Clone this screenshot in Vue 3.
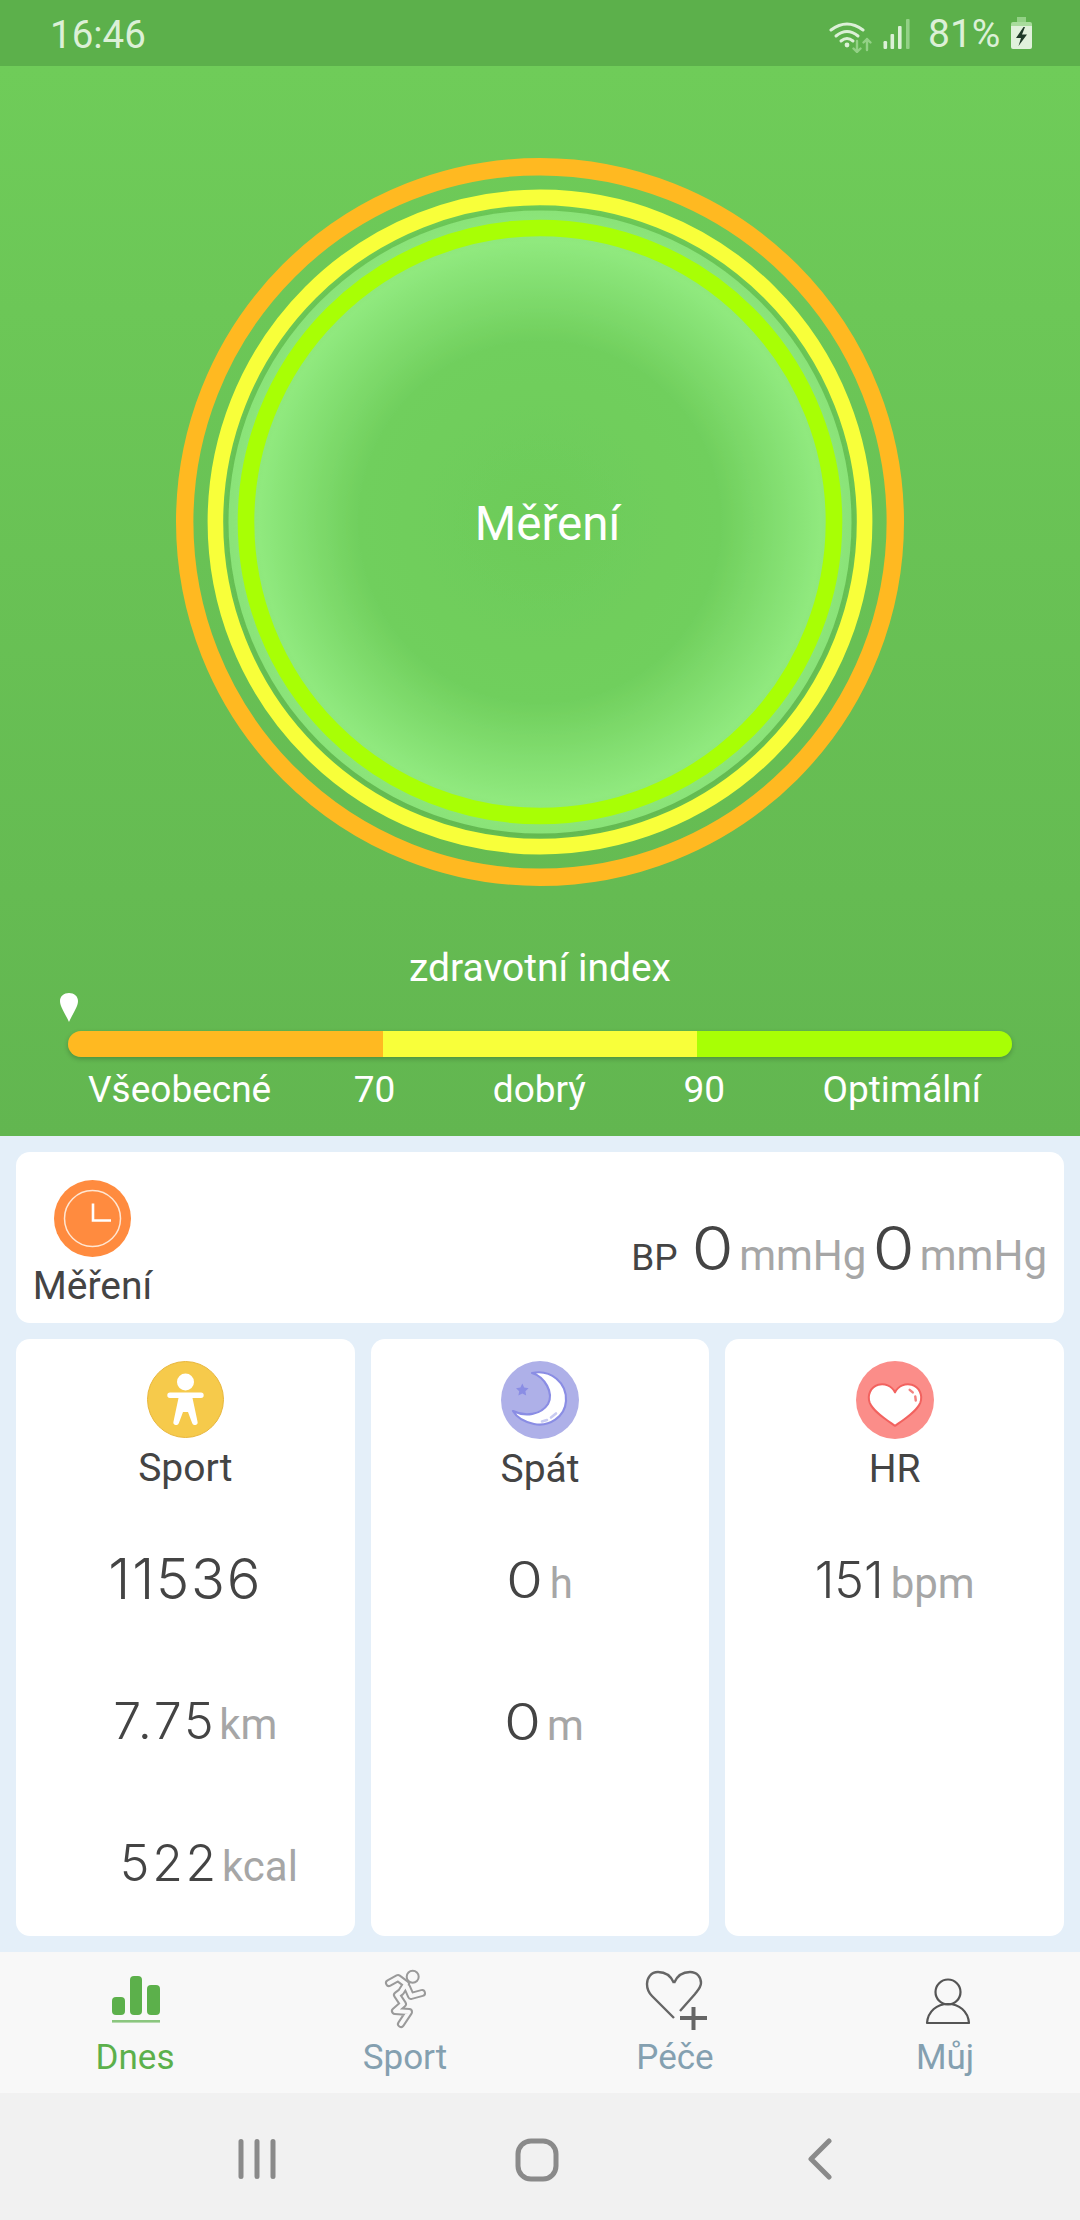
<script setup>
const labels = ['Všeobecné', '70', 'dobrý', '90', 'Optimální']
</script>

<template>
  <div class="page">
    <header class="status">
      <span class="time">16:46</span>
      <div class="status-right">
        <svg class="wifi" width="50" height="36" viewBox="0 0 50 36" fill="none">
          <g stroke="#dcf0d7" stroke-width="3" stroke-linecap="round">
            <path d="M3 13Q19 1 35 13" />
            <path d="M8 19Q19 10 30 19" />
            <path d="M13 24Q19 19 25 24" />
          </g>
          <circle cx="19" cy="28" r="2.4" fill="#dcf0d7" />
          <g stroke="#93d186" stroke-width="2.4" stroke-linecap="round" stroke-linejoin="round">
            <path d="M29 24V35M25.5 31.5L29 35L32.5 31.5" />
            <path d="M39 33V22M35.5 25.5L39 22L42.5 25.5" />
          </g>
        </svg>
        <svg class="signal" width="27" height="32" viewBox="0 0 27 32">
          <rect x="0.5" y="23" width="3.6" height="8" rx="1.2" fill="#dcf0d7" />
          <rect x="7.5" y="16" width="3.6" height="15" rx="1" fill="#dcf0d7" />
          <rect x="15" y="8" width="3.6" height="23" rx="1" fill="#dcf0d7" />
          <rect x="23" y="1" width="3.6" height="30" rx="1" fill="#93d186" />
        </svg>
        <span class="pct">81%</span>
        <svg class="batt" width="21" height="32" viewBox="0 0 21 32">
          <path d="M6 0h9v5H6z" fill="#93d186" />
          <path d="M2 5h17a2 2 0 0 1 2 2v3H0V7a2 2 0 0 1 2-2z" fill="#a8dc9c" />
          <path d="M0 9h21v21a2 2 0 0 1-2 2H2a2 2 0 0 1-2-2z" fill="#e0f1db" />
          <path d="M12.5 10L5 21h5L7.5 29L16 17.5h-5L14 10z" fill="#1f3a28" />
        </svg>
      </div>
    </header>

    <section class="hero">
      <div class="ring-box">
        <svg class="rings" width="728" height="728" viewBox="0 0 728 728" fill="none">
          <defs>
            <radialGradient id="disk" cx="50%" cy="50%" r="50%">
              <stop offset="0%" stop-color="#6dcb59" />
              <stop offset="58%" stop-color="#70cf5d" />
              <stop offset="90%" stop-color="#90e97e" />
              <stop offset="100%" stop-color="#8ae378" />
            </radialGradient>
            <filter id="soft" x="-10%" y="-10%" width="120%" height="120%">
              <feDropShadow dx="0" dy="0" stdDeviation="2" flood-color="#3f8f35" flood-opacity="0.18" />
            </filter>
          </defs>
          <circle cx="364" cy="364" r="355.3" stroke="#ffb921" stroke-width="17.4" />
          <circle cx="364" cy="364" r="324.6" stroke="#f8ff3a" stroke-width="15.6" />
          <circle cx="364" cy="364" r="311.5" fill="url(#disk)" filter="url(#soft)" />
          <circle cx="364" cy="364" r="294" stroke="#a8ff05" stroke-width="16.6" />
        </svg>
        <span class="ring-label">Měření</span>
      </div>
      <h2 class="title">zdravotní index</h2>
      <div class="scale">
        <svg class="pin" width="18" height="29" viewBox="0 0 18 29">
          <path d="M9 29C6 22 0 14 0 8C0 3 4 0 9 0C14 0 18 3 18 8C18 14 12 22 9 29Z" fill="#fff" />
        </svg>
        <i class="seg orange" /><i class="seg yellow" /><i class="seg lime" />
      </div>
      <div class="scale-labels">
        <span v-for="l in labels" :key="l">{{ l }}</span>
      </div>
    </section>

    <main class="content">
      <section class="card bp-card">
        <div class="bp-left">
          <svg width="77" height="77" viewBox="0 0 77 77">
            <circle cx="38.5" cy="38.5" r="38.5" fill="#ff8b3f" />
            <circle cx="38.5" cy="38.5" r="28" fill="none" stroke="#ffe6d2" stroke-width="1.5" />
            <path d="M39 23.5V40.5H57" fill="none" stroke="#fff" stroke-width="2.6" />
          </svg>
          <span class="label">Měření</span>
        </div>
        <div class="bp-right">
          <span class="bp-tag">BP</span>
          <span class="num zero bp-num">0</span><span class="unit">mmHg</span>
          <span class="num zero bp-num">0</span><span class="unit">mmHg</span>
        </div>
      </section>

      <div class="cols">
        <section class="card col">
          <svg width="77" height="77" viewBox="0 0 77 77">
            <circle cx="38.5" cy="38.5" r="38" fill="#f6ca4b" stroke="#e8b63c" stroke-width="1" />
            <circle cx="38.5" cy="21" r="8.5" fill="#fff" />
            <path d="M23 31.5H54a2.6 2.6 0 0 1 0 5.4H45.5L50.5 60.5a2.7 2.7 0 0 1-5.4 1.5L41 51H36L31.9 62a2.7 2.7 0 0 1-5.4-1.5L31.5 36.9H23a2.6 2.6 0 0 1 0-5.4Z" fill="#fff" />
          </svg>
          <span class="label">Sport</span>
          <div class="rows">
            <div class="row r-steps"><span class="num big">11536</span></div>
            <div class="row r-km"><span class="num wide">7.75</span><span class="unit tight">km</span></div>
            <div class="row r-kcal"><span class="num wide">522</span><span class="unit tight">kcal</span></div>
          </div>
        </section>
        <section class="card col">
          <svg width="78" height="78" viewBox="0 0 78 78">
            <circle cx="39" cy="39" r="39" fill="#aeb0e8" />
            <path d="M21.3 22.5L23.2 26.6L27.6 27.2L24.4 30.2L25.2 34.6L21.3 32.5L17.4 34.6L18.2 30.2L15 27.2L19.4 26.6Z" fill="#8a8de4" />
            <path d="M31 12C50 8 66 22 65 40C64 56 48 66 33 63C24 61 16 57 12 50C24 56 40 54 47 43C53 32 44 16 31 12Z" fill="#fff" stroke="#8a8de4" stroke-width="2.2" stroke-linejoin="round" />
            <path d="M41 60.5L46 59M50 56.5L55 52.5" stroke="#c9cbf2" stroke-width="2.6" stroke-linecap="round" fill="none" />
          </svg>
          <span class="label">Spát</span>
          <div class="rows">
            <div class="row"><span class="num zero">0</span><span class="unit">h</span></div>
            <div class="row r-m"><span class="num zero">0</span><span class="unit">m</span></div>
          </div>
        </section>
        <section class="card col">
          <svg width="78" height="78" viewBox="0 0 77 77">
            <circle cx="38.5" cy="38.5" r="38.5" fill="#fb8d89" />
            <path d="M38.5 31C35 24 28 22 22 23.5C14 26 11 34 13.5 41C17 50 30 58 38.5 64C47 58 60 50 63.5 41C66 34 63 26 55 23.5C49 22 42 24 38.5 31Z" fill="#fff" stroke="#f2625f" stroke-width="2" stroke-linejoin="round" />
            <path d="M53 28.5L56 31M58.5 35L59 39" stroke="#f2827f" stroke-width="2.4" stroke-linecap="round" fill="none" />
          </svg>
          <span class="label">HR</span>
          <div class="rows">
            <div class="row"><span class="num">151</span><span class="unit">bpm</span></div>
          </div>
        </section>
      </div>
    </main>

    <nav class="tabs">
      <div class="tab active">
        <svg width="80" height="62" viewBox="0 0 80 62" fill="#5cb04b">
          <rect x="17" y="29" width="13" height="18" rx="4" />
          <rect x="35" y="8" width="12" height="39" rx="4" />
          <rect x="52" y="17" width="13" height="30" rx="4" />
          <rect x="17" y="52" width="48" height="2.6" opacity="0.7" />
        </svg>
        <span>Dnes</span>
      </div>
      <div class="tab">
        <svg width="80" height="62" viewBox="0 0 80 62" fill="none">
          <g transform="translate(5 -18)">
            <circle cx="42.7" cy="26.7" r="6" stroke="#9a9a9a" stroke-width="2" />
            <g stroke-linecap="round" stroke-linejoin="round">
              <path d="M19 33L28 28L36 34L31 42L27 45L33 54L25 61L39 62L31 74M37 37L41 46L52 43" stroke="#9a9a9a" stroke-width="8" />
              <path d="M19 33L28 28L36 34L31 42L27 45L33 54L25 61L39 62L31 74M37 37L41 46L52 43" stroke="#f8f8f8" stroke-width="4" />
            </g>
          </g>
        </svg>
        <span>Sport</span>
      </div>
      <div class="tab">
        <svg width="80" height="62" viewBox="0 0 80 62" fill="none">
          <g transform="translate(10 2)">
            <path d="M29 13C26 6 20 2 13 2C6 2 2 8 2 14C2 19 4 23 7 26L29 48M35 41L50 24C54 19 56 17 56 13C56 7 52 2 45 2C38 2 32 6 29 13" stroke="#666" stroke-width="2.4" />
            <path d="M35 48H62M48.5 37V60" stroke="#666" stroke-width="4" />
          </g>
        </svg>
        <span>Péče</span>
      </div>
      <div class="tab">
        <svg width="80" height="62" viewBox="0 0 80 62" fill="none">
          <g transform="translate(20 7)" stroke="#555" stroke-width="2.2">
            <circle cx="23" cy="17" r="12.5" />
            <path d="M2 48C3 36 12 29 23 29C34 29 43 36 44 48Z" stroke-linejoin="round" />
          </g>
        </svg>
        <span>Můj</span>
      </div>
    </nav>

    <footer class="sysbar">
      <svg width="40" height="40" viewBox="0 0 40 40" class="sys-menu">
        <path d="M3 2.5V37.5M19 2.5V37.5M35 2.5V37.5" stroke="#8a8a8a" stroke-width="5" stroke-linecap="round" />
      </svg>
      <svg width="44" height="44" viewBox="0 0 44 44" class="sys-home">
        <rect x="3" y="3" width="38" height="38" rx="13" fill="none" stroke="#8a8a8a" stroke-width="5" />
      </svg>
      <svg width="26" height="42" viewBox="0 0 26 42" class="sys-back">
        <path d="M22 3L4 21L22 39" fill="none" stroke="#8a8a8a" stroke-width="5" stroke-linecap="round" stroke-linejoin="round" />
      </svg>
    </footer>
  </div>
</template>

<style scoped>
.page {
  width: 1080px;
  height: 2220px;
  display: flex;
  flex-direction: column;
  background: #e4eff9;
  font-family: Roboto, "Liberation Sans", sans-serif;
  overflow: hidden;
}
.status {
  height: 66px;
  flex: none;
  background: #5cb04b;
  display: flex;
  align-items: center;
  justify-content: space-between;
  padding: 0 48px 0 50px;
  color: #dcf0d7;
  font-size: 38.5px;
}
.time { position: relative; top: 1px; }
.status-right { display: flex; align-items: center; }
.wifi { margin-right: 5px; margin-top: 4px; }
.signal { margin-right: 18px; margin-top: 2px; }
.pct { width: 72px; margin-right: 11px; margin-top: 2px; white-space: nowrap; font-size: 39px; }

.hero {
  height: 1070px;
  flex: none;
  padding-top: 92px;
  box-sizing: border-box;
  background: linear-gradient(180deg, #6fcc59 0%, #62b650 100%);
  color: #fff;
  display: flex;
  flex-direction: column;
  align-items: center;
}
.ring-box { position: relative; width: 728px; height: 728px; flex: none; }
.rings { display: block; }
.ring-label {
  position: absolute;
  left: 15px;
  right: 0;
  top: 336px;
  text-align: center;
  font-size: 47.5px;
  line-height: 60px;
}
.title {
  margin: 60px 0 0;
  font-size: 39px;
  font-weight: 400;
  line-height: 44px;
}
.scale {
  position: relative;
  margin-top: 41px;
  width: 944px;
  height: 26px;
  border-radius: 13px;
  display: flex;
  box-shadow: 0 2px 5px rgba(0, 0, 0, 0.22);
}
.pin { position: absolute; left: -8px; top: -38px; }
.seg { flex: 1; display: block; }
.orange { background: #ffb921; border-radius: 13px 0 0 13px; }
.yellow { background: #f8ff3a; }
.lime { background: #a8ff05; border-radius: 0 13px 13px 0; }
.scale-labels {
  width: 1080px;
  box-sizing: border-box;
  margin-top: 11px;
  padding: 0 99px 0 88px;
  display: flex;
  justify-content: space-between;
  font-size: 37px;
  line-height: 44px;
}
.scale-labels span:first-child { margin-right: -15px; }

.content {
  flex: 1;
  padding: 16px;
  display: flex;
  flex-direction: column;
  gap: 16px;
}
.card { background: #fff; border-radius: 14px; }
.bp-card {
  height: 171px;
  flex: none;
  display: flex;
  justify-content: space-between;
  padding: 28px 17px 0;
  box-sizing: border-box;
}
.bp-left { display: flex; flex-direction: column; align-items: center; width: 119px; }
.bp-left svg { display: block; flex: none; }
.label {
  display: block;
  margin-top: 7px;
  font-size: 39px;
  line-height: 46px;
  color: #444;
  white-space: nowrap;
}
.bp-left .label { margin-top: 6px; }
.bp-right {
  display: flex;
  align-items: baseline;
  padding-top: 28px;
  align-self: flex-start;
}
.bp-tag { font-size: 37px; color: #444; margin-right: 15px; }
.num {
  font-family: Inter, Roboto, sans-serif;
  font-weight: 300;
  font-size: 50px;
  color: #444;
  line-height: 80px;
}
.big { font-size: 56px; letter-spacing: 1.8px; }
.wide { letter-spacing: 2.7px; }
.zero {
  display: inline-block;
  transform: scaleX(1.2);
  margin: 0 0.05em;
}
.bp-num {
  font-size: 60px;
  transform: scaleX(1.14);
  margin: 0 0.02em;
}
.unit { font-size: 42px; color: #a6a6a6; margin-left: 7px; }
.tight { margin-left: 3px; }
.bp-right .unit { margin-right: 7px; }
.bp-right .unit:last-child { margin-right: 0; }

.cols {
  flex: 1;
  display: grid;
  grid-template-columns: repeat(3, 1fr);
  gap: 16px;
}
.col {
  padding-top: 22px;
  display: flex;
  flex-direction: column;
  align-items: center;
}
.col > svg { display: block; flex: none; }
.rows {
  margin-top: 48px;
  display: flex;
  flex-direction: column;
  gap: 62px;
  align-self: stretch;
}
.row { display: flex; align-items: baseline; justify-content: center; height: 80px; }
.r-km { margin-left: 20px; }
.r-kcal { margin-left: 47px; }
.r-m { margin-left: 8px; }

.tabs {
  height: 141px;
  flex: none;
  background: #f8f8f8;
  display: grid;
  grid-template-columns: repeat(4, 1fr);
  padding-top: 16px;
  box-sizing: border-box;
}
.tab {
  display: flex;
  flex-direction: column;
  align-items: center;
  font-size: 35px;
  line-height: 40px;
  color: #84a0b0;
}
.tab svg { display: block; margin-bottom: 8px; }
.active { color: #5cb04b; }

.sysbar {
  height: 127px;
  flex: none;
  background: #f1f1f1;
  position: relative;
}
.sysbar svg { position: absolute; }
.sys-menu { left: 238px; top: 46px; }
.sys-home { left: 515px; top: 45px; }
.sys-back { left: 807px; top: 45px; }
</style>

<style>
html, body { margin: 0; padding: 0; }
</style>
